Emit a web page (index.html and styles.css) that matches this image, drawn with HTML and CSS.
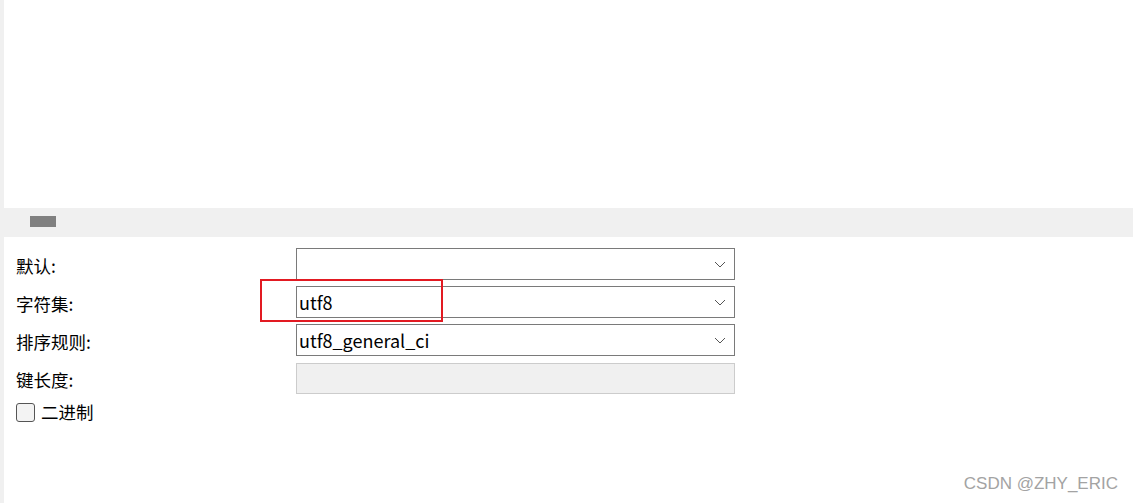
FILE: index.html
```html
<!DOCTYPE html>
<html lang="zh">
<head>
<meta charset="utf-8">
<link rel="stylesheet" href="styles.css">
</head>
<body>
<div class="page">
  <div class="strip"></div>
  <div class="main">
    <div class="blank"></div>
    <div class="band"><span class="grip"></span></div>
    <div class="form">
      <div class="row">
        <label class="lbl">默认:</label>
        <div class="field select"><span class="val"></span><svg class="chev" viewBox="0 0 12 7" width="12" height="7"><path d="M1 1 L6 6 L11 1" fill="none" stroke="#555" stroke-width="1"/></svg></div>
      </div>
      <div class="row">
        <label class="lbl">字符集:</label>
        <div class="field select"><span class="val">utf8</span><svg class="chev" viewBox="0 0 12 7" width="12" height="7"><path d="M1 1 L6 6 L11 1" fill="none" stroke="#555" stroke-width="1"/></svg></div>
      </div>
      <div class="row">
        <label class="lbl">排序规则:</label>
        <div class="field select"><span class="val">utf8_general_ci</span><svg class="chev" viewBox="0 0 12 7" width="12" height="7"><path d="M1 1 L6 6 L11 1" fill="none" stroke="#555" stroke-width="1"/></svg></div>
      </div>
      <div class="row">
        <label class="lbl">键长度:</label>
        <div class="field disabled"></div>
      </div>
      <div class="checkrow">
        <span class="box"></span><span class="ctext">二进制</span>
      </div>
      <div class="highlight"></div>
    </div>
  </div>
  <div class="watermark">CSDN @ZHY_ERIC</div>
</div>
</body>
</html>
```

FILE: styles.css
```css
html, body {
  margin: 0;
  padding: 0;
  background: #ffffff;
}
.page {
  position: relative;
  width: 1133px;
  height: 503px;
  display: flex;
  overflow: hidden;
  font-family: "Noto Sans CJK SC", "Noto Sans", sans-serif;
  color: #000;
}
.strip {
  width: 4px;
  background: #f0f0f0;
  flex: none;
}
.main {
  flex: 1;
  display: flex;
  flex-direction: column;
}
.blank {
  height: 208px;
}
.band {
  height: 29px;
  background: #f0f0f0;
  display: flex;
  align-items: center;
  padding-left: 26px;
}
.grip {
  width: 26px;
  height: 11px;
  background: #808080;
  margin-top: -2px;
}
.form {
  position: relative;
  padding-top: 11px;
  display: flex;
  flex-direction: column;
  gap: 6px;
}
.row {
  display: flex;
  align-items: center;
  height: 32px;
}
.lbl {
  width: 292px;
  padding-left: 12px;
  box-sizing: border-box;
  font-size: 17.5px;
  line-height: 20px;
  margin-top: 3px;
}
.field {
  width: 439px;
  height: 32px;
  box-sizing: border-box;
  border: 1px solid #7a7a7a;
  display: flex;
  align-items: center;
  padding-left: 2px;
  padding-right: 8px;
}
.val {
  flex: 1;
  font-size: 18px;
  line-height: 20px;
}
.chev {
  flex: none;
}
.disabled {
  border-color: #cccccc;
  background: #f0f0f0;
  height: 31px;
}
.checkrow {
  display: flex;
  align-items: center;
  padding-left: 12px;
  margin-top: -1px;
  height: 26px;
}
.box {
  width: 17px;
  height: 17px;
  border: 1px solid #555;
  border-radius: 3px;
  background: #f3f3f3;
  flex: none;
}
.ctext {
  margin-left: 6px;
  font-size: 17.5px;
  line-height: 20px;
}
.highlight {
  position: absolute;
  left: 256px;
  top: 42px;
  width: 179px;
  height: 39px;
  border: 2px solid #e21a22;
}
.watermark {
  position: absolute;
  right: 15px;
  bottom: 9px;
  font-family: "Liberation Sans", Arial, sans-serif;
  font-size: 17px;
  color: #a3a3a3;
}
```
